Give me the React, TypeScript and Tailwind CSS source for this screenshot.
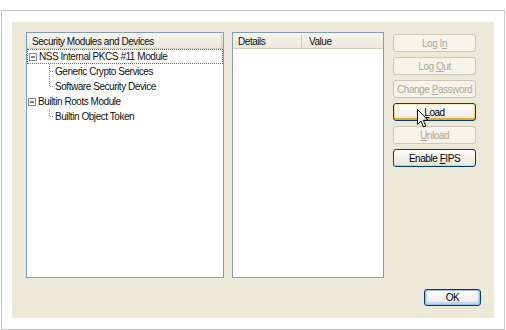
import type { ReactNode } from "react";

type BtnState = "normal" | "disabled" | "hot" | "default";

function XpButton({
  children,
  state = "normal",
  size = "h-[18px] w-[83px]",
}: {
  children: ReactNode;
  state?: BtnState;
  size?: string;
}) {
  const look =
    state === "disabled"
      ? "border-[#c9c7ba] bg-[#f5f4ea] text-[#aca899]"
      : state === "hot"
        ? "border-[#003c74] bg-linear-to-b from-white to-[#ebe8dc] text-black shadow-[inset_0_-2px_0_#e8a52a,inset_0_1px_0_#ffe9ac,inset_1px_0_0_#fcd27c,inset_-1px_0_0_#fcd27c]"
        : state === "default"
          ? "border-[#003c74] bg-linear-to-b from-white to-[#ebe8dc] text-black shadow-[inset_0_0_0_1px_#9fbdeb,inset_0_-1px_0_2px_#c4d6f3]"
          : "border-[#003c74] bg-linear-to-b from-white to-[#e8e5d8] text-black shadow-[inset_0_-1px_0_#d6d0c2]";
  return (
    <div
      className={`flex items-center justify-center rounded-[3px] border ${size} ${look}`}
    >
      <span className="whitespace-pre">{children}</span>
    </div>
  );
}

function MinusBox() {
  return (
    <svg width="8" height="8" viewBox="0 0 8 8" className="shrink-0">
      <rect x="0.5" y="0.5" width="7" height="7" fill="#fff" stroke="#7b8ea4" />
      <path d="M2 4H6" stroke="#000" strokeWidth="1" />
    </svg>
  );
}

function Connector({ last }: { last?: boolean }) {
  return (
    <svg width="5" height="15" viewBox="0 0 5 15" className="shrink-0">
      <path
        d={last ? "M0.5 0V7.5" : "M0.5 0V15"}
        stroke="#9a9a9a"
        strokeDasharray="1 1"
      />
      <path d="M1 7.5H5" stroke="#9a9a9a" strokeDasharray="1 1" />
    </svg>
  );
}

function ParentRow({ label, focused }: { label: string; focused?: boolean }) {
  return (
    <div
      className={`flex h-[15px] items-center pl-[1px] ${
        focused ? "border border-dotted border-[#5b6f95]" : ""
      }`}
    >
      <MinusBox />
      <span className="ml-[2px]">{label}</span>
    </div>
  );
}

function ChildRow({ label, last }: { label: string; last?: boolean }) {
  return (
    <div className="flex h-[15px] items-center pl-[22px]">
      <Connector last={last} />
      <span className="ml-[1px]">{label}</span>
    </div>
  );
}

export default function App() {
  return (
    <div className="h-[330px] w-[506px] bg-white pl-[1px] pt-[10px] font-['Liberation_Sans',Arial,sans-serif] text-[10px] tracking-[-0.45px] text-[#111]">
      <div className="h-[320px] w-[504px] border border-[#c9c9c9] pl-[10px] pt-[11px]">
        <div className="flex h-[296px] w-[482px] flex-col bg-[#ece9d8] pl-[14px] pt-[10px]">
          <div className="flex">
            {/* tree panel */}
            <div className="h-[246px] w-[198px] border border-[#7f9db9] bg-white">
              <div className="flex h-[16px] border-b border-[#d3cfbf] bg-linear-to-b from-[#f7f6f0] to-[#ebe9dc] pt-[2px]">
                <div className="flex w-[195px] items-center border-r border-[#cfcbbb] pl-[5px]">
                  Security Modules and Devices
                </div>
              </div>
              <ParentRow label="NSS Internal PKCS #11 Module" focused />
              <ChildRow label="Generic Crypto Services" />
              <ChildRow label="Software Security Device" last />
              <ParentRow label="Builtin Roots Module" />
              <ChildRow label="Builtin Object Token" last />
            </div>

            {/* details panel */}
            <div className="ml-[8px] h-[246px] w-[152px] border border-[#7f9db9] bg-white">
              <div className="flex h-[16px] border-b border-[#d3cfbf] bg-linear-to-b from-[#f7f6f0] to-[#ebe9dc] pt-[2px]">
                <div className="flex w-[69px] items-center border-r border-[#cfcbbb] pl-[5px]">
                  Details
                </div>
                <div className="flex items-center pl-[7px]">Value</div>
              </div>
            </div>

            {/* buttons */}
            <div className="ml-[9px] mt-[2px] flex flex-col gap-[5px]">
              <XpButton state="disabled">
                Log I<u>n</u>
              </XpButton>
              <XpButton state="disabled">
                Log <u>O</u>ut
              </XpButton>
              <XpButton state="disabled">
                Change <u>P</u>assword
              </XpButton>
              <div className="relative">
                <XpButton state="hot">
                  <u>L</u>oad
                </XpButton>
                <svg
                  width="12"
                  height="19"
                  viewBox="0 0 12 19"
                  className="absolute left-[24px] top-[6px]"
                >
                  <path
                    d="M0.5 0.5V15.5L4 12L6.5 18L8.8 17L6.3 11.2H11Z"
                    fill="#fff"
                    stroke="#000"
                    strokeLinejoin="miter"
                  />
                </svg>
              </div>
              <XpButton state="disabled">
                <u>U</u>nload
              </XpButton>
              <XpButton>
                Enable <u>F</u>IPS
              </XpButton>
            </div>
          </div>

          <div className="mt-[11px] flex justify-end pr-[13px]">
            <XpButton state="default" size="h-[17px] w-[57px]">
              OK
            </XpButton>
          </div>
        </div>
      </div>
    </div>
  );
}
